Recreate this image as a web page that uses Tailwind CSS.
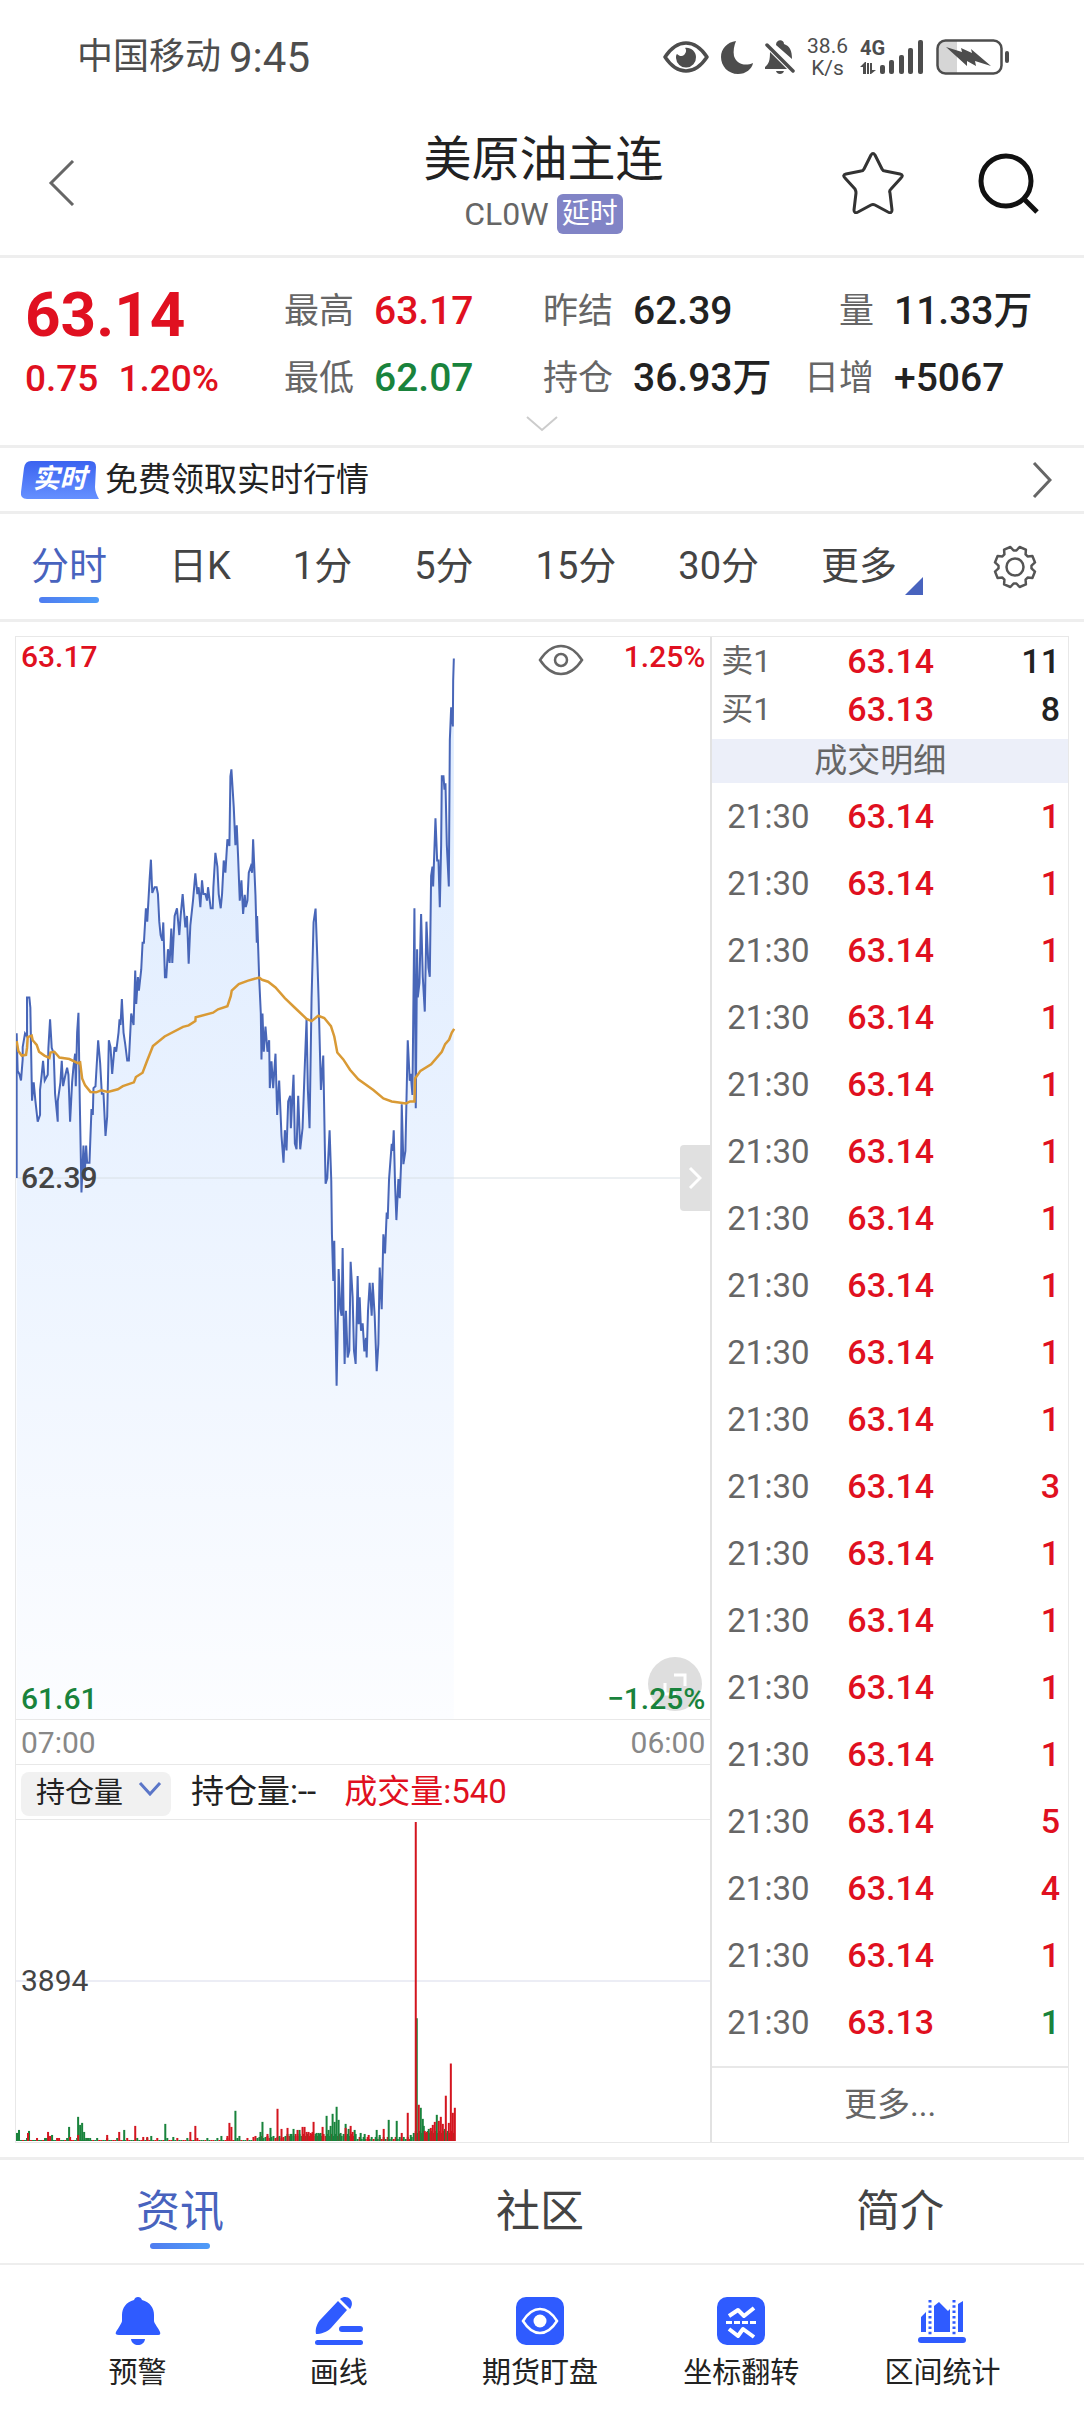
<!DOCTYPE html>
<html lang="zh-CN">
<head>
    <meta charset="UTF-8">
    <meta name="viewport" content="width=device-width, initial-scale=1.0">
    <title>美原油主连 CL0W</title>
    <script src="https://cdn.jsdelivr.net/npm/@tailwindcss/browser@4"></script>
    <style>
        body {
            font-family: Roboto, 'Noto Sans CJK SC', sans-serif;
        }
    </style>
</head>
<body class="bg-white text-[#222]">

    <!-- Status bar -->
    <div class="flex h-[114px] items-center justify-between pr-[74px] pl-[77px] text-[#4d4d4d]">
        <div class="flex items-center gap-2">
            <span class="text-[36px]">中国移动</span>
            <span class="text-[42px]">9:45</span>
        </div>
        <div class="flex items-center gap-3">
            <svg class="h-[32px] w-[46px]" viewBox="0 0 46 32" fill="none">
                <path d="M2 16C8 7 15 2 23 2s15 5 21 14c-6 9-13 14-21 14S8 25 2 16z" stroke="#4d4d4d" stroke-width="3.5" stroke-linejoin="round"/>
                <path d="M22 7c5-1 11 3 11 9a10 10 0 0 1-20 1c0-2 0-3 1-4 2 2 5 3 7 1s3-5 1-7z" fill="#4d4d4d"/>
            </svg>
            <svg class="h-[34px] w-[32px]" viewBox="0 0 32 34">
                <path d="M15 1C6 2 0 9 0 17c0 9 7 17 17 17 8 0 14-5 15-11-9 4-17 0-19-7-1-5 0-10 2-15z" fill="#4d4d4d"/>
            </svg>
            <svg class="h-[34px] w-[30px]" viewBox="0 0 30 34" fill="#4d4d4d">
                <path d="M11 5c0-6 8-6 8-1 6 2 8 7 8 15z"/>
                <path d="M5 12l17 17H0v-2c4-3 5-7 5-15z"/>
                <path d="M11 31h8c-1 4-7 4-8 0z"/>
                <path d="M2 5l26 26" stroke="#4d4d4d" stroke-width="3.5" stroke-linecap="round"/>
            </svg>
            <div class="flex flex-col text-center text-[21px] leading-[22px]"><span>38.6</span><span>K/s</span></div>
            <div class="relative h-[36px] w-[64px]">
                <span class="absolute top-0 left-0 text-[20px] leading-[18px] font-bold">4G</span>
                <svg class="h-full w-full" viewBox="0 0 64 36" fill="#4d4d4d">
                    <path d="M0 28l5-5h1v12H3v-7zM7 24h2v11H7zM10 24h2v7h4l-5 4h-1z"/>
                    <rect x="20" y="26" width="5" height="9" rx="2"/>
                    <rect x="29" y="21" width="5" height="14" rx="2"/>
                    <rect x="39" y="16" width="5" height="19" rx="2"/>
                    <rect x="48" y="9" width="5" height="26" rx="2"/>
                    <rect x="58" y="1" width="5" height="34" rx="2"/>
                </svg>
            </div>
            <svg class="h-[36px] w-[74px]" viewBox="0 0 74 36" fill="#4d4d4d">
                <path d="M2 10q0-8 8-8h11v32H10q-8 0-8-8z" fill="#d6d6d6"/>
                <rect x="1.5" y="1.5" width="64" height="33" rx="8" fill="none" stroke="#4d4d4d" stroke-width="2.5"/>
                <rect x="69" y="12" width="4" height="12" rx="2"/>
                <path d="M10 8l16 5-1-4 11 5-1-4 20 17-16-5 1 5-9-5 0 5z"/>
            </svg>
        </div>
    </div>

    <!-- Title bar -->
    <header class="grid h-[144px] grid-cols-3 items-center border-b-[3px] border-[#eee] pr-[45px] pb-1 pl-[48px]">
        <button aria-label="返回" class="w-[28px]">
            <svg class="h-[46px] w-[28px]" viewBox="0 0 28 46" fill="none" stroke="#666" stroke-width="3"><path d="M25 1L3 23l22 22"/></svg>
        </button>
        <div class="flex flex-col items-center gap-1.5">
            <h1 class="text-[48px] leading-[56px]">美原油主连</h1>
            <div class="flex items-center gap-2">
                <span class="text-[32px] leading-10 text-[#666]">CL0W</span>
                <span class="rounded-md bg-[#8184c6] px-[5px] text-[28px] leading-10 text-white">延时</span>
            </div>
        </div>
        <div class="flex justify-end gap-[73px]">
            <button aria-label="收藏">
                <svg class="h-[62px] w-[62px]" viewBox="0 0 62 62" fill="none" stroke="#333" stroke-width="3" stroke-linejoin="round">
                    <path d="M29 3q2-3 4 0l7 14q1 2 3 2l15 3q4 1 1 4L49 37q-2 2-1 4l2 17q0 4-4 2l-13-7q-2-1-4 0l-13 7q-4 2-4-2l2-17q0-2-1-4L3 26q-3-3 1-4l15-3q2 0 3-2z"/>
                </svg>
            </button>
            <button aria-label="搜索">
                <svg class="h-[62px] w-[62px]" viewBox="0 0 62 62" fill="none" stroke="#111" stroke-width="5">
                    <circle cx="29" cy="29" r="25"/><path d="M47 47l13 13"/>
                </svg>
            </button>
        </div>
    </header>

    <!-- Quote summary -->
    <section class="border-b-[3px] border-[#eee] pb-[13px]">
        <div class="grid grid-cols-[259fr_259fr_261fr_280fr] pt-[20px] pl-[25px]">
            <div class="text-[#e01020]">
                <div class="text-[62px] leading-[74px] font-bold">63.14</div>
                <div class="mt-[6px] flex gap-5 text-[37px] leading-[42px] font-medium"><span>0.75</span><span>1.20%</span></div>
            </div>
            <dl class="grid grid-cols-[70px_1fr] content-start gap-x-5 text-[39px] leading-[67px] font-medium">
                <dt class="text-[35px] font-normal text-[#666]">最高</dt><dd class="text-[#e01020]">63.17</dd>
                <dt class="text-[35px] font-normal text-[#666]">最低</dt><dd class="text-[#19833c]">62.07</dd>
            </dl>
            <dl class="grid grid-cols-[70px_1fr] content-start gap-x-5 text-[39px] leading-[67px] font-medium">
                <dt class="text-[35px] font-normal text-[#666]">昨结</dt><dd>62.39</dd>
                <dt class="text-[35px] font-normal text-[#666]">持仓</dt><dd>36.93万</dd>
            </dl>
            <dl class="grid grid-cols-[70px_1fr] content-start gap-x-5 text-[39px] leading-[67px] font-medium">
                <dt class="text-right text-[35px] font-normal text-[#666]">量</dt><dd>11.33万</dd>
                <dt class="text-right text-[35px] font-normal text-[#666]">日增</dt><dd>+5067</dd>
            </dl>
        </div>
        <button aria-label="展开" class="mx-auto mt-[4px] block w-[32px]">
            <svg class="h-[16px] w-[32px]" viewBox="0 0 32 16" fill="none" stroke="#ccc" stroke-width="2"><path d="M1 1l15 13L31 1"/></svg>
        </button>
    </section>

    <!-- Realtime quote banner -->
    <a href="#" class="flex h-[66px] items-center border-b-[3px] border-[#eee] pr-[32px] pl-[20px]">
        <span class="relative flex h-[38px] w-[79px] items-center justify-center">
            <svg class="absolute inset-0 h-full w-full" viewBox="0 0 79 38">
                <defs><linearGradient id="tag" x1="0" y1="0" x2="0" y2="1"><stop offset="0" stop-color="#3b63f0"/><stop offset="1" stop-color="#6590ff"/></linearGradient></defs>
                <path d="M11 0h59q6 0 6 6l-1 20q0 5 4 12H7q-7 0-6-7L4 7q1-7 7-7z" fill="url(#tag)"/>
            </svg>
            <span class="relative text-[27px] leading-none font-bold text-white italic">实时</span>
        </span>
        <span class="ml-[6px] flex-1 text-[33px]">免费领取实时行情</span>
        <svg class="h-[36px] w-[20px]" viewBox="0 0 20 36" fill="none" stroke="#666" stroke-width="3"><path d="M2 1l16 17L2 35"/></svg>
    </a>

    <!-- Period tabs -->
    <nav class="flex h-[108px] items-center justify-between border-b-[3px] border-[#eee] pr-[46px] pl-[31px] text-[38px] text-[#444]">
        <div class="flex gap-[62px]">
            <button class="relative text-[#4863be]">分时<span class="absolute -bottom-[8px] left-1/2 h-[6px] w-[60px] -translate-x-1/2 rounded-full bg-linear-to-r from-[#4f7cf0] to-[#4f9cf8]"></span></button>
            <button>日K</button>
            <button>1分</button>
            <button>5分</button>
            <button>15分</button>
            <button>30分</button>
            <button class="relative">更多<svg class="absolute -right-[26px] bottom-0 h-[18px] w-[18px]" viewBox="0 0 18 18"><path d="M18 0v18H0z" fill="#4863be"/></svg></button>
        </div>
        <button aria-label="设置">
            <svg class="h-[46px] w-[46px]" viewBox="-23 -23 46 46" fill="none" stroke="#555" stroke-width="2.5" stroke-linejoin="round">
                <path d="M16.500 1.400L20 4.600 17.400 10.900 12.600 10.600 10.600 12.600 10.900 17.400 4.600 20 1.400 16.500H-1.400L-4.600 20-10.900 17.400-10.600 12.600-12.600 10.600-17.400 10.900-20 4.600-16.500 1.400V-1.400L-20-4.600-17.400-10.900-12.600-10.600-10.600-12.600-10.900-17.400-4.600-20-1.400-16.500H1.400L4.600-20 10.900-17.400 10.600-12.600 12.600-10.600 17.400-10.900 20-4.600 16.500-1.400z"/>
                <circle r="8.5"/>
            </svg>
        </button>
    </nav>

    <main class="mx-[15px] mt-[14px] mb-[14px] flex border border-[#e8e8e8]">
        <!-- Charts -->
        <div class="flex min-w-0 flex-1 flex-col">
            <div class="relative h-[1082px] text-[30px] leading-9 font-medium">
                <svg class="absolute inset-0 h-full w-full" viewBox="45 16 2079 2828" preserveAspectRatio="none" fill="none">
                    <defs><linearGradient id="area" gradientUnits="userSpaceOnUse" x1="0" y1="72" x2="0" y2="2844"><stop offset="0" stop-color="#dceafe"/><stop offset="0.5" stop-color="#ebf3ff"/><stop offset="1" stop-color="#fcfdff"/></linearGradient></defs>
                    <path id="price-area" fill="url(#area)"/>
                    <path d="M45 1430H2124" stroke="#d9e0e5" stroke-width="1" vector-effect="non-scaling-stroke"/>
                    <path id="price-line" stroke="#4866b8" stroke-width="2" vector-effect="non-scaling-stroke"/>
                    <path id="average-line" stroke="#d99a35" stroke-width="2.5" vector-effect="non-scaling-stroke"/>
                </svg>
                <span class="absolute top-[2px] left-[5px] text-[#e01020]">63.17</span>
                <span class="absolute top-[2px] right-[5px] text-[#e01020]">1.25%</span>
                <button aria-label="显示" class="absolute top-[7px] right-[126px]">
                    <svg class="h-[32px] w-[46px]" viewBox="0 0 46 32" fill="none" stroke="#666" stroke-width="2.5"><path d="M2 16C8 7 15 2 23 2s15 5 21 14c-6 9-13 14-21 14S8 25 2 16z"/><circle cx="23" cy="16" r="6"/></svg>
                </button>
                <span class="absolute top-1/2 left-[5px] -translate-y-1/2 text-[#444]">62.39</span>
                <button aria-label="收起明细" class="absolute top-1/2 right-0 flex h-[66px] w-[30px] -translate-y-1/2 items-center justify-center rounded-l bg-[#e0e0e0]">
                    <svg class="h-[24px] w-[14px]" viewBox="0 0 14 24" fill="none" stroke="#fff" stroke-width="3"><path d="M2 2l10 10L2 22"/></svg>
                </button>
                <button aria-label="全屏" class="absolute right-[8px] bottom-[8px] h-[54px] w-[54px] rounded-full bg-[#dedede]">
                    <svg class="h-full w-full" viewBox="0 0 54 54" fill="none" stroke="#fff" stroke-width="3"><path d="M26 18h11v11M17 26v11h11"/></svg>
                </button>
                <span class="absolute bottom-[2px] left-[5px] text-[#19833c]">61.61</span>
                <span class="absolute right-[5px] bottom-[2px] text-[#19833c]">−1.25%</span>
            </div>
            <div class="flex h-[46px] items-center justify-between border-y border-[#e8e8e8] px-[5px] text-[30px] text-[#888]">
                <span>07:00</span><span>06:00</span>
            </div>
            <div class="flex h-[55px] items-center border-b border-[#e8e8e8] pl-[5px] text-[33px]">
                <label for="indicator" class="sr-only">指标</label>
                <div class="relative">
                    <select id="indicator" class="h-[44px] w-[150px] appearance-none rounded-lg bg-[#f1f1f1] pl-[15px] text-[29px]"><option>持仓量</option><option>成交量</option></select>
                    <svg class="pointer-events-none absolute top-[15px] right-[9px] h-[14px] w-[24px]" viewBox="0 0 24 14" fill="none" stroke="#5b76c8" stroke-width="3"><path d="M2 1l10 11L22 1"/></svg>
                </div>
                <span class="ml-[20px]">持仓量:--</span>
                <span class="ml-[28px] text-[#e01020]">成交量:540</span>
            </div>
            <div class="relative h-[322px]">
                <svg class="absolute inset-0 h-full w-full" viewBox="0 0 693 320" preserveAspectRatio="none">
                    <path d="M0 160H693" stroke="#ecedf5" stroke-width="2"/>
                    <g id="volume"></g>
                </svg>
                <span class="absolute top-1/2 left-[5px] -translate-y-1/2 text-[30px] leading-9 text-[#444]">3894</span>
            </div>
        </div>

        <!-- Order book and trades -->
        <aside class="flex w-[34%] flex-col border-l-2 border-[#e2e2e2] text-[33px] text-[#666]">
            <table class="w-full table-fixed">
                <tbody class="leading-[48px] font-medium">
                    <tr><th scope="row" class="w-[135px] pl-[9px] text-left text-[32px] font-normal">卖1</th><td class="text-[34px] text-[#e01020]">63.14</td><td class="w-[80px] pr-[8px] text-right text-[34px] text-[#222]">11</td></tr>
                    <tr><th scope="row" class="w-[135px] pl-[9px] text-left text-[32px] font-normal">买1</th><td class="text-[34px] text-[#e01020]">63.13</td><td class="w-[80px] pr-[8px] text-right text-[34px] text-[#222]">8</td></tr>
                </tbody>
            </table>
            <h2 class="mt-[6px] bg-[#eceff9] pr-[20px] text-center leading-[44px]">成交明细</h2>
            <table class="w-full table-fixed">
                <tbody id="trades"></tbody>
            </table>
            <a href="#" class="mt-auto flex h-[76px] items-center justify-center border-t-2 border-[#e8e8e8]">更多...</a>
        </aside>
    </main>

    <!-- Content tabs -->
    <nav class="grid h-[108px] grid-cols-3 border-t-[3px] border-b-2 border-[#eee] pr-[4px] text-[44px] text-[#444]">
        <button class="relative text-[#4863be]">资讯<span class="absolute bottom-[14px] left-1/2 h-[6px] w-[60px] -translate-x-1/2 rounded-full bg-linear-to-r from-[#4f7cf0] to-[#4f9cf8]"></span></button>
        <button>社区</button>
        <button>简介</button>
    </nav>

    <!-- Bottom toolbar -->
    <footer class="grid grid-cols-5 pt-[32px] pr-[41px] pl-[37px] text-[29px] leading-[42px]">
        <button class="flex flex-col items-center gap-[7px]">
            <svg class="h-[48px] w-[48px]" viewBox="0 0 48 48" fill="#2f5bff">
                <path d="M20 3q1-3 4-3t4 3c8 2 12 8 12 15v6c0 2 5 8 6 11s-1 3-3 3H5c-3 0-4-1-3-3s6-9 6-11v-6C8 11 12 5 20 3z"/>
                <path d="M17 42h14c-1 8-13 8-14 0z"/>
            </svg>
            预警
        </button>
        <button class="flex flex-col items-center gap-[7px]">
            <svg class="h-[48px] w-[48px]" viewBox="0 0 48 48" fill="#2f5bff">
                <path d="M23 4l9 9-16 18C12 35 6 37 1 37c-1-5 1-11 5-15z"/>
                <path d="M25 2c4-3 8-2 10 0s3 6 0 10z"/>
                <rect x="24" y="29" width="24" height="6" rx="3"/>
                <rect y="43" width="48" height="5" rx="2.5"/>
            </svg>
            画线
        </button>
        <button class="flex flex-col items-center gap-[7px]">
            <svg class="h-[48px] w-[48px]" viewBox="0 0 48 48">
                <rect width="48" height="48" rx="10" fill="#2f5bff"/>
                <path d="M7 24c5-8 11-12 17-12s12 4 17 12c-5 8-11 12-17 12S12 32 7 24z" fill="none" stroke="#fff" stroke-width="2.5"/>
                <circle cx="24" cy="24" r="6.5" fill="#fff"/>
            </svg>
            期货盯盘
        </button>
        <button class="flex flex-col items-center gap-[7px]">
            <svg class="h-[48px] w-[48px]" viewBox="0 0 48 48" fill="none" stroke="#fff" stroke-width="4">
                <rect width="48" height="48" rx="10" fill="#2f5bff" stroke="none"/>
                <path d="M12 19l9-6 6 6 10-8M12 32l9 7 5-7 11 8" stroke-linejoin="round"/>
                <path d="M9 25.500h30" stroke-width="3" stroke-dasharray="6 2"/>
            </svg>
            坐标翻转
        </button>
        <button class="flex flex-col items-center gap-[7px]">
            <svg class="h-[48px] w-[48px]" viewBox="0 0 48 48" fill="#2f5bff">
                <path d="M3 35V20l5-5v20zM16 35V9l5-4 9 9 2-2v23zM40 35V7l5-3v31z"/>
                <path d="M12 3v35M36 3v35" stroke="#2f5bff" stroke-width="3" stroke-dasharray="2.5 2.8"/>
                <rect y="40" width="48" height="6" rx="3"/>
            </svg>
            区间统计
        </button>
    </footer>

    <script>
        // Intraday price and average price, x y pairs in chart units
        const price = '47 1430 47 1052 50 1150 55 1158 60 1175 65 1120 65 1088 72 1052 78 1060 78 958 85 958 88 985 93 1228 98 1180 103 1228 110 1283 117 1265 117 1200 122 1160 126 1124 131 1175 140 1160 142 1090 147 1015 152 1090 158 1105 162 1210 170 1283 170 1230 178 1180 182 1124 186 1190 193 1160 198 1142 202 1160 207 1283 213 1180 217 1140 222 1105 224 1190 228 1050 232 998 236 1230 241 1468 247 1345 250 1430 255 1345 258 1390 265 1390 271 1250 275 1265 277 1195 283 1190 291 1070 297 1130 302 1210 307 1210 313 1320 318 1270 323 1070 328 1088 333 1158 340 1088 345 1100 352 1050 355 1015 358 1030 362 962 367 1050 372 1080 378 1123 383 1123 390 1000 397 1030 402 888 405 975 410 905 413 940 420 885 424 815 428 815 434 725 438 760 445 650 449 598 453 685 460 670 466 670 470 688 474 760 478 795 483 810 486 762 491 905 495 905 500 832 505 868 510 778 513 868 520 745 527 725 534 795 538 745 544 688 552 775 557 745 562 870 567 770 575 705 582 634 588 688 592 670 597 722 602 652 606 688 612 688 617 705 620 670 628 725 634 725 636 670 642 580 648 616 652 688 658 725 662 688 667 600 672 632 678 545 684 562 687 380 690 362 697 460 702 560 706 508 710 590 715 705 720 652 725 740 730 690 733 722 738 705 742 632 748 616 752 632 755 545 762 690 766 815 767 745 773 905 778 1000 780 1120 783 1000 787 1100 792 1034 798 1100 803 1070 805 1195 810 1125 815 1195 822 1105 827 1265 833 1175 840 1320 846 1390 850 1305 855 1358 860 1230 866 1215 868 1300 876 1160 880 1340 885 1355 890 1215 896 1355 903 1300 910 1130 915 1015 919 1200 924 1300 930 960 936 762 942 726 947 850 951 960 958 1200 965 1110 970 1360 972 1445 977 1430 984 1305 989 1437 991 1577 995 1699 998 1594 1001 1786 1005 1973 1009 1786 1011 1668 1016 1773 1020 1790 1023 1613 1026 1786 1029 1916 1033 1777 1038 1899 1043 1881 1047 1649 1053 1742 1057 1881 1062 1916 1068 1686 1071 1812 1074 1742 1078 1829 1083 1810 1088 1883 1093 1848 1095 1899 1099 1777 1104 1704 1110 1790 1113 1704 1119 1790 1125 1935 1130 1864 1134 1664 1140 1773 1145 1577 1150 1627 1155 1520 1158 1537 1162 1433 1170 1341 1173 1359 1176 1305 1180 1446 1184 1540 1190 1433 1194 1483 1198 1394 1200 1237 1205 1394 1211 1359 1215 1193 1218 1070 1224 1176 1227 1158 1232 1213 1238 725 1242 1248 1246 832 1248 958 1253 920 1258 740 1263 904 1269 995 1274 760 1280 880 1284 904 1288 640 1292 616 1294 668 1301 490 1306 600 1310 600 1314 722 1318 560 1320 380 1325 380 1328 415 1331 398 1335 560 1341 668 1344 285 1348 200 1353 250 1354 130 1356 72';
        const average = '47 1072 52 1098 62 1110 75 1108 78 1090 80 1062 92 1058 95 1070 107 1082 114 1100 130 1110 145 1116 148 1102 160 1100 175 1115 205 1119 230 1130 237 1128 243 1170 252 1188 268 1205 285 1206 300 1201 320 1205 350 1198 365 1190 398 1180 404 1166 424 1155 437 1125 455 1085 490 1060 545 1035 562 1031 582 1020 583 1010 635 998 650 989 678 981 688 955 691 940 712 923 740 914 773 906 782 912 800 917 822 932 850 960 880 985 915 1014 930 1020 950 1006 968 1012 988 1033 998 1060 1007 1102 1025 1120 1045 1147 1070 1172 1115 1200 1145 1222 1170 1230 1213 1235 1225 1230 1238 1230 1240 1170 1256 1150 1288 1133 1320 1100 1330 1080 1342 1068 1350 1050 1357 1040';

        document.getElementById('price-line').setAttribute('d', 'M' + price);
        document.getElementById('price-area').setAttribute('d', 'M' + price + ' V2844 H47z');
        document.getElementById('average-line').setAttribute('d', 'M' + average);

        // Volume bars: [x, height]
        const red = [[11, 8], [31, 9], [33, 5], [42, 3], [53, 4], [61, 6], [90, 6], [102, 9], [118, 15], [126, 4], [130, 4], [173, 9], [178, 15], [212, 18], [214, 14], [210, 5], [250, 7], [260, 32], [264, 12], [270, 13], [280, 11], [285, 14], [287, 14], [289, 9], [291, 9], [293, 8], [295, 9], [296, 19], [305, 14], [328, 13], [333, 15], [335, 9], [351, 6], [366, 12], [384, 8], [390, 28], [398, 317], [401, 36], [407, 10], [409, 9], [413, 13], [415, 16], [417, 19], [421, 20], [423, 24], [425, 17], [428, 45], [431, 18], [433, 77], [435, 28], [437, 33]];
        const green = [[0, 8], [2, 11], [12, 10], [28, 3], [35, 6], [52, 14], [61, 24], [63, 16], [65, 18], [67, 9], [69, 3], [71, 3], [73, 3], [107, 11], [134, 5], [148, 17], [156, 4], [204, 5], [218, 30], [222, 5], [243, 9], [245, 19], [253, 13], [273, 7], [276, 12], [282, 11], [299, 8], [301, 8], [303, 8], [309, 25], [311, 11], [313, 15], [315, 27], [317, 19], [319, 34], [321, 21], [323, 8], [328, 17], [331, 12], [337, 11], [343, 8], [347, 7], [359, 11], [362, 6], [371, 21], [379, 20], [393, 6], [399, 122], [403, 33], [405, 22], [406, 15], [411, 12], [419, 26], [427, 12]];

        // Quiet minutes between the larger bars
        const quiet = x => x < 235 ? 1 + (x * 7 % 5 === 0 ? 2 : 0) : x < 270 ? 3 + x * 5 % 3 : x < 340 ? 5 + x * 7 % 4 : x < 396 ? 2 + x * 5 % 4 : 8 + x * 3 % 4;
        const bar = (x, h, color) => `<rect x="${x}" y="${319 - h}" width="2" height="${h}" fill="${color}"/>`;
        let bars = '';
        for (let x = 0; x < 437; x += 2) {
            bars += bar(x, quiet(x), x * 13 % 7 < 3 ? '#d3151f' : '#19833c');
        }
        green.forEach(([x, h]) => bars += bar(x, h, '#19833c'));
        red.forEach(([x, h]) => bars += bar(x, h, '#d3151f'));
        document.getElementById('volume').innerHTML = bars;

        // Trade list: quantity per row, the last one traded lower
        const quantities = [1, 1, 1, 1, 1, 1, 1, 1, 1, 1, 3, 1, 1, 1, 1, 5, 4, 1, 1];
        document.getElementById('trades').innerHTML = quantities.map((qty, i) => {
            const last = i === quantities.length - 1;
            return `<tr class="h-[67px]">
                <td class="w-[135px] pl-[15px]">21:30</td>
                <td class="text-[34px] font-medium text-[#e01020]">${last ? '63.13' : '63.14'}</td>
                <td class="w-[80px] pr-[8px] text-right text-[34px] font-medium ${last ? 'text-[#19833c]' : 'text-[#e01020]'}">${qty}</td>
            </tr>`;
        }).join('');
    </script>
</body>
</html>
